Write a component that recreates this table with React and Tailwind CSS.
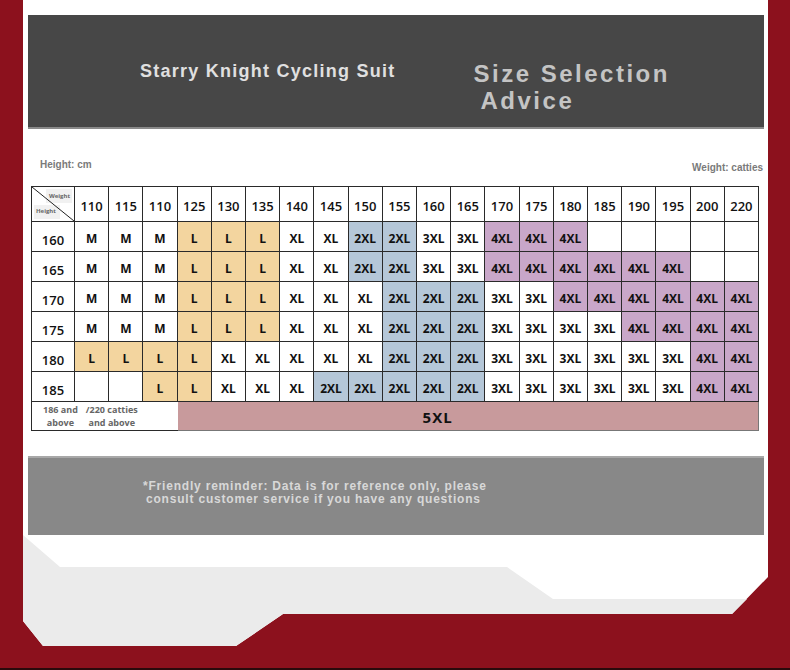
const weights = [110, 115, 110, 125, 130, 135, 140, 145, 150, 155, 160, 165, 170, 175, 180, 185, 190, 195, 200, 220];

const rows = [
  { h: 160, sizes: "M M M L L L XL XL 2XL 2XL 3XL 3XL 4XL 4XL 4XL - - - - -" },
  { h: 165, sizes: "M M M L L L XL XL 2XL 2XL 3XL 3XL 4XL 4XL 4XL 4XL 4XL 4XL - -" },
  { h: 170, sizes: "M M M L L L XL XL XL 2XL 2XL 2XL 3XL 3XL 4XL 4XL 4XL 4XL 4XL 4XL" },
  { h: 175, sizes: "M M M L L L XL XL XL 2XL 2XL 2XL 3XL 3XL 3XL 3XL 4XL 4XL 4XL 4XL" },
  { h: 180, sizes: "L L L L XL XL XL XL XL 2XL 2XL 2XL 3XL 3XL 3XL 3XL 3XL 3XL 4XL 4XL" },
  { h: 185, sizes: "- - L L XL XL XL 2XL 2XL 2XL 2XL 2XL 3XL 3XL 3XL 3XL 3XL 3XL 4XL 4XL" },
];

const fills = {
  L: "bg-[#f3d59f]",
  "2XL": "bg-[#b5c7d8]",
  "4XL": "bg-[#c9a7c9]",
};

function CornerCell() {
  return (
    <div className="relative border-r border-b border-[#2a2a2a] bg-white">
      <svg className="absolute inset-0" width="42" height="34" viewBox="0 0 42 34">
        <rect x="14" y="2" width="26" height="14" fill="#f1f1f1" />
        <rect x="2" y="18" width="26" height="14" fill="#f1f1f1" />
        <line x1="0" y1="0" x2="42" y2="34" stroke="#222" strokeWidth="1" />
      </svg>
      <span className="absolute right-[4px] top-[6px] text-[6px] font-bold leading-none text-[#666]">Weight</span>
      <span className="absolute left-[4px] bottom-[7px] text-[6px] font-bold leading-none text-[#666]">Height</span>
    </div>
  );
}

function SizeCell({ size }) {
  const label = size === "-" ? "" : size;
  return (
    <div
      className={`flex items-center justify-center pt-[4px] border-r border-b border-[#2a2a2a] text-[12px] font-bold text-[#111] ${
        fills[size] || "bg-white"
      }`}
    >
      {label}
    </div>
  );
}

function SizeTable() {
  return (
    <div
      className="ml-[8px] mr-[9px] grid grid-cols-[43px_repeat(20,1fr)] grid-rows-[35px_repeat(6,30px)_29px] border-l border-t border-[#2a2a2a]"
      style={{ fontFamily: '"Open Sans", "Noto Sans", sans-serif' }}
    >
      <CornerCell />
      {weights.map((w, i) => (
        <div
          key={i}
          className="flex items-center justify-center pt-[6px] border-r border-b border-[#2a2a2a] bg-white text-[13px] font-semibold text-[#111]"
        >
          {w}
        </div>
      ))}
      {rows.map((row) => (
        <div key={row.h} className="contents">
          <div className="flex items-center justify-center pt-[8px] border-r border-b border-[#2a2a2a] bg-white text-[13px] font-semibold text-[#111]">
            {row.h}
          </div>
          {row.sizes.split(" ").map((s, i) => (
            <SizeCell key={i} size={s} />
          ))}
        </div>
      ))}
      <div className="col-span-4 flex items-center gap-[8px] pl-[11px] pt-[1px] border-b border-[#2a2a2a] bg-white text-[9px] font-bold leading-[12.5px] text-[#666]">
        <div className="text-center">
          <div>186 and</div>
          <div>above</div>
        </div>
        <div className="text-center">
          <div>/220 catties</div>
          <div>and above</div>
        </div>
      </div>
      <div className="col-span-17 flex items-center pl-[245px] pt-[3px] border-r border-b border-[#777] bg-[#c89a9c] text-[15px] font-bold tracking-[1px] text-[#111]">
        5XL
      </div>
    </div>
  );
}

function BottomDecor() {
  return (
    <svg width="745" height="134" viewBox="0 0 745 134" className="block">
      <polygon
        points="0,0 745,0 745,42 709,79 260,79 213,111 20,111 0,86"
        fill="#ffffff"
      />
      <polygon
        points="0,0 37,32 484,32 530,64 724,64 709,79 260,79 213,111 20,111 0,86"
        fill="#ebebeb"
      />
    </svg>
  );
}

export default function App() {
  return (
    <div
      className="w-[790px] h-[670px] overflow-hidden bg-[#8c111d] border-b-2 border-[#2a0a0c]"
      style={{ fontFamily: '"Liberation Sans", Arial, sans-serif' }}
    >
      <div className="ml-[23px] w-[745px]">
        <div className="bg-white pt-[15px]">
          <div className="ml-[5px] mr-[4px] h-[114px] bg-[#474747] border-b-2 border-[#8a8a8a] flex">
            <div className="pl-[112px] pt-[47px] text-[18px] font-bold tracking-[1.25px] text-[#e0e0e0] leading-none">
              Starry Knight Cycling Suit
            </div>
            <div className="pl-[78px] pt-[45px] text-[24px] font-bold tracking-[2.5px] text-[#c4c4c4] leading-[27px]">
              Size Selection
              <div className="pl-[7px]">Advice</div>
            </div>
          </div>

          <div className="flex justify-between pl-[17px] pr-[5px] pt-[28px] h-[57px] text-[10px] font-bold text-[#7a7a7a]">
            <span>Height: cm</span>
            <span className="pt-[3px]">Weight: catties</span>
          </div>

          <SizeTable />

          <div className="pt-[25px]">
            <div className="ml-[5px] mr-[4px] h-[79px] bg-[#888888] border-t-2 border-[#a8a8a8] pl-[115px] pt-[22px] text-[12px] font-bold leading-[13px] tracking-[0.8px] text-[#d8d8d8]">
              <div>*Friendly reminder: Data is for reference only, please</div>
              <div className="pl-[3px]">consult customer service if you have any questions</div>
            </div>
          </div>
        </div>
        <BottomDecor />
      </div>
    </div>
  );
}
